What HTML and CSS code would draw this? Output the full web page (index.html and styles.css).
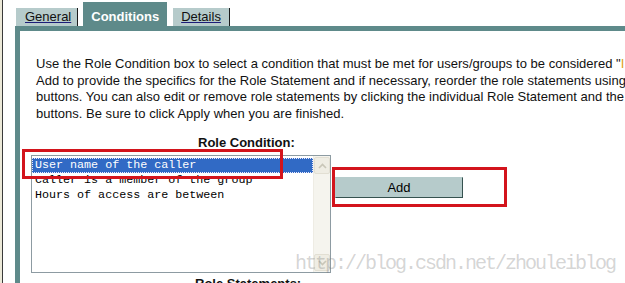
FILE: index.html
```html
<!DOCTYPE html>
<html lang="en">
<head>
    <meta charset="UTF-8">
    <title>Role Conditions</title>
    <link rel="stylesheet" href="styles.css">
</head>
<body>
    <div class="frame">
        <div class="tabs">
            <a class="tab tab-general" href="#">General</a>
            <span class="tab tab-active">Conditions</span>
            <a class="tab tab-details" href="#">Details</a>
        </div>
        <div class="panel">
            <p class="intro">Use the Role Condition box to select a condition that must be met for users/groups to be considered "<span class="hl">I</span><br>Add to provide the specifics for the Role Statement and if necessary, reorder the role statements using<br>buttons. You can also edit or remove role statements by clicking the individual Role Statement and the<br>buttons. Be sure to click Apply when you are finished.</p>
            <div class="label label-condition">Role Condition:</div>
            <div class="condition-row">
                <div class="listbox">
                    <ul class="options">
                        <li class="selected">User name of the caller</li>
                        <li>Caller is a member of the group</li>
                        <li>Hours of access are between</li>
                    </ul>
                    <div class="scrollbar">
                        <div class="scroll-btn">
                            <svg width="9" height="6" viewBox="0 0 9 6"><path d="M1 5 L4.5 1.5 L8 5" fill="none" stroke="#c9c6b8" stroke-width="1.6"/></svg>
                        </div>
                        <div class="scroll-track"></div>
                        <div class="scroll-btn">
                            <svg width="9" height="6" viewBox="0 0 9 6"><path d="M1 1 L4.5 4.5 L8 1" fill="none" stroke="#c9c6b8" stroke-width="1.6"/></svg>
                        </div>
                    </div>
                </div>
                <div class="mark mark-add">
                    <button type="button" class="btn-add">Add</button>
                </div>
                <div class="mark mark-list"></div>
            </div>
            <div class="label label-statement">Role Statements:</div>
        </div>
        <div class="watermark">http://blog.csdn.net/zhouleiblog</div>
    </div>
</body>
</html>
```

FILE: styles.css
```css
/* General Styles */
body {
    margin: 0;
    background-color: #ece9d8;
    font-family: "Liberation Sans", Arial, sans-serif;
    font-size: 13px;
    color: #111;
}

.frame {
    position: relative;
    margin-left: 2px;
    height: 283px;
    overflow: hidden;
    background: #fff;
    border-left: 1px solid #3a3a3a;
}

/* Tabs */
.tabs {
    display: flex;
    align-items: flex-end;
    height: 26px;
    padding-left: 13px;
}

.tab {
    height: 18px;
    line-height: 18px;
    background-color: #b6cbcb;
    color: #111;
    text-decoration: underline;
    text-decoration-color: #1c1c78;
    border-right: 1px solid #1a1a1a;
}

.tab-general {
    padding: 0 6px 0 9px;
}

.tab-details {
    margin-left: 6px;
    padding: 0 8px 0 8px;
}

.tab-active {
    margin-left: 5px;
    height: 24px;
    padding: 6px 8px 0 8px;
    box-sizing: border-box;
    background-color: #5e8a8a;
    color: #fff;
    font-weight: bold;
    text-decoration: none;
    border-right: none;
}

/* Panel */
.panel {
    margin-left: 12px;
    border-top: 5px solid #5e8a8a;
    border-left: 5px solid #5e8a8a;
    height: 260px;
}

.intro {
    margin: 25px 0 0 0;
    padding-left: 16px;
    line-height: 16.5px;
    letter-spacing: 0.02px;
    white-space: nowrap;
}

.hl {
    color: #e0a010;
}

.label {
    font-weight: bold;
    line-height: 16px;
}

.label-condition {
    margin-top: 13px;
    padding-left: 178px;
}

.label-statement {
    margin-top: 3px;
    padding-left: 175px;
}

/* Condition list and Add */
.condition-row {
    position: relative;
    display: flex;
    align-items: flex-start;
    margin-top: 4px;
    padding-left: 11px;
}

.listbox {
    display: flex;
    width: 300px;
    height: 118px;
    box-sizing: border-box;
    border: 1px solid #8d9ba2;
    background: #fff;
}

.options {
    flex: 1;
    margin: 0;
    padding: 2px 0 0 0;
    list-style: none;
    font-family: "Liberation Mono", "Courier New", monospace;
    font-size: 11.7px;
    line-height: 15px;
    color: #000;
}

.options li {
    padding-left: 3px;
    white-space: nowrap;
}

.options .selected {
    background-color: #316ac5;
    color: #fff;
    outline: 1px dotted #e8e8ff;
    outline-offset: -1px;
}

.scrollbar {
    display: flex;
    flex-direction: column;
    width: 16px;
    background-color: #f5f4ee;
    border-left: 1px solid #eeece4;
}

.scroll-btn {
    display: flex;
    justify-content: center;
    align-items: center;
    height: 15px;
    margin: 1px 0;
    background-color: #efede4;
    border: 1px solid #e2dfd3;
    border-radius: 2px;
}

.scroll-track {
    flex: 1;
}

.mark {
    border: 3px solid #d3141c;
}

.mark-add {
    margin: 12px 0 0 1px;
    padding: 7px 41px 6px 0;
}

.btn-add {
    display: block;
    width: 128px;
    height: 21px;
    margin: 0;
    padding: 0;
    background-color: #b6cbcb;
    border: 1px solid #b6cbcb;
    border-right-color: #35524f;
    border-bottom-color: #35524f;
    font-family: "Liberation Sans", Arial, sans-serif;
    font-size: 13px;
    color: #000;
}

.mark-list {
    position: absolute;
    left: 2px;
    top: -6px;
    width: 261px;
    height: 30px;
    box-sizing: border-box;
}

/* Watermark */
.watermark {
    position: absolute;
    left: 292px;
    top: 254px;
    font-family: "Liberation Mono", monospace;
    font-size: 20px;
    line-height: 20px;
    letter-spacing: -2px;
    color: rgba(110, 110, 110, 0.3);
    white-space: nowrap;
}
```
